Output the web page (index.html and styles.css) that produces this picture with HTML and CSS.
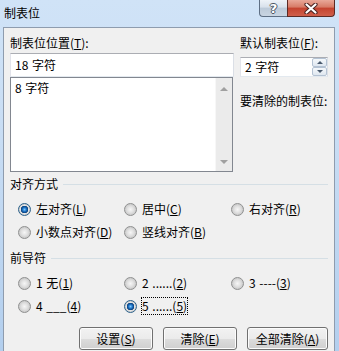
FILE: index.html
```html
<!DOCTYPE html>
<html>
<head>
    <title>制表位</title>
    <link rel="stylesheet" href="styles.css">
</head>
<body>
<div class="window">
    <div class="titlebar">
        <span class="title">制表位</span>
        <div class="caption-buttons">
            <span class="cap-btn help">?</span>
            <span class="cap-btn close">
                <svg width="14" height="11" viewBox="0 0 14 11">
                    <path d="M2.5 1.5 L11.5 9.5 M11.5 1.5 L2.5 9.5" stroke="#4a2320" stroke-width="4.2" stroke-linecap="round"/>
                    <path d="M2.5 1.5 L11.5 9.5 M11.5 1.5 L2.5 9.5" stroke="#fff" stroke-width="2.2" stroke-linecap="round"/>
                </svg>
            </span>
        </div>
    </div>

    <div class="client">
        <div class="top">
            <div class="col-left">
                <div class="lbl">制表位位置(<u>T</u>):</div>
                <div class="textbox">18 字符</div>
                <div class="listbox">
                    <div class="list-items">
                        <div class="list-item">8 字符</div>
                    </div>
                    <div class="scrollbar">
                        <span class="arrow up"></span>
                        <span class="arrow down"></span>
                    </div>
                </div>
            </div>
            <div class="col-right">
                <div class="lbl">默认制表位(<u>F</u>):</div>
                <div class="spin">
                    <span class="spin-text">2 字符</span>
                    <div class="spin-btns">
                        <span class="spin-btn"><span class="tri up"></span></span>
                        <span class="spin-btn"><span class="tri down"></span></span>
                    </div>
                </div>
                <div class="lbl clear-lbl">要清除的制表位:</div>
            </div>
        </div>

        <div class="group-head"><span>对齐方式</span><span class="rule"></span></div>
        <div class="radio-grid">
            <div class="radio"><span class="dot on"></span><span>左对齐(<u>L</u>)</span></div>
            <div class="radio"><span class="dot"></span><span>居中(<u>C</u>)</span></div>
            <div class="radio"><span class="dot"></span><span>右对齐(<u>R</u>)</span></div>
            <div class="radio"><span class="dot"></span><span>小数点对齐(<u>D</u>)</span></div>
            <div class="radio"><span class="dot"></span><span>竖线对齐(<u>B</u>)</span></div>
        </div>

        <div class="group-head leaders"><span>前导符</span><span class="rule"></span></div>
        <div class="radio-grid">
            <div class="radio"><span class="dot"></span><span>1 无(<u>1</u>)</span></div>
            <div class="radio"><span class="dot"></span><span>2 ......(<u>2</u>)</span></div>
            <div class="radio"><span class="dot"></span><span>3 ----(<u>3</u>)</span></div>
            <div class="radio"><span class="dot"></span><span>4 ___(<u>4</u>)</span></div>
            <div class="radio"><span class="dot on"></span><span class="focus">5 ......(<u>5</u>)</span></div>
        </div>

        <div class="buttons">
            <span class="btn btn-set"><span>设置(<u>S</u>)</span></span>
            <span class="btn btn-clear"><span>清除(<u>E</u>)</span></span>
            <span class="btn btn-all"><span>全部清除(<u>A</u>)</span></span>
        </div>
    </div>
</div>
</body>
</html>
```

FILE: styles.css
```css
body {
    margin: 0;
    font-family: "Noto Sans CJK SC", "Noto Sans", sans-serif;
    font-size: 12px;
    word-spacing: 1px;
    color: #000;
}
u {
    text-underline-offset: 1px;
}
.window {
    width: 339px;
    height: 351px;
    overflow: hidden;
    background: linear-gradient(180deg, #d0e3f7 0%, #c8ddf4 40%, #b3cfee 100%);
}
.titlebar {
    height: 27px;
    display: flex;
    justify-content: space-between;
    align-items: flex-start;
}
.title {
    padding: 5px 0 0 4px;
    line-height: 16px;
}
.caption-buttons {
    display: flex;
    margin-right: 4px;
}
.cap-btn {
    height: 17px;
    box-sizing: border-box;
    display: flex;
    align-items: center;
    justify-content: center;
    border: 1px solid #5e6f84;
    border-top: none;
}
.help {
    width: 28px;
    border-right: none;
    border-radius: 0 0 0 4px;
    background: linear-gradient(180deg, #eef3f8 0%, #d8e1eb 45%, #bccad9 50%, #c9d5e2 100%);
    color: #fff;
    font-family: "DejaVu Sans", sans-serif;
    font-weight: bold;
    font-size: 13px;
    line-height: 15px;
    text-shadow: 1px 0 0 #4b5563, -1px 0 0 #4b5563, 0 1px 0 #4b5563, 0 -1px 0 #4b5563;
}
.close {
    width: 48px;
    border-color: #5c2a24;
    border-radius: 0 0 4px 0;
    background: linear-gradient(180deg, #e9a899 0%, #d77a66 45%, #c4432f 50%, #cf5f4b 100%);
}
.client {
    margin: 0 4px 0 3px;
    height: 330px;
    border: 1px solid #8e9cae;
    border-bottom: none;
    background: #f0f0f0;
    padding: 7px 6px 0;
}
.top {
    display: flex;
}
.col-left {
    width: 224px;
}
.col-right {
    width: 88px;
    margin-left: 6px;
}
.lbl {
    line-height: 16px;
    white-space: nowrap;
}
.textbox {
    margin-top: 2px;
    width: 224px;
    height: 24px;
    box-sizing: border-box;
    border: 1px solid;
    border-color: #abadb3 #dbdfe6 #e3e9ef #e2e3ea;
    background: #fff;
    padding-left: 4px;
    line-height: 22px;
}
.listbox {
    width: 223px;
    height: 95px;
    box-sizing: border-box;
    border: 1px solid #828790;
    background: #fff;
    display: flex;
}
.list-items {
    flex: 1;
    padding: 2px 0 0 4px;
}
.list-item {
    line-height: 16px;
}
.scrollbar {
    width: 17px;
    box-sizing: border-box;
    background: #ebebeb;
    border-left: 1px solid #f7f7f7;
    display: flex;
    flex-direction: column;
    justify-content: space-between;
    align-items: center;
    padding: 9px 0 7px;
}
.arrow {
    width: 0;
    height: 0;
    border-left: 4px solid transparent;
    border-right: 4px solid transparent;
}
.arrow.up {
    border-bottom: 4px solid #a0a0a0;
}
.arrow.down {
    border-top: 4px solid #a0a0a0;
}
.spin {
    margin-top: 6px;
    height: 20px;
    box-sizing: border-box;
    border: 1px solid;
    border-color: #abadb3 #dbdfe6 #e3e9ef #e2e3ea;
    background: #fff;
    display: flex;
}
.spin-text {
    flex: 1;
    padding-left: 4px;
    line-height: 18px;
}
.spin-btns {
    width: 15px;
    display: flex;
    flex-direction: column;
}
.spin-btn {
    flex: 1;
    display: flex;
    align-items: center;
    justify-content: center;
    border: 1px solid #b4c2d3;
    border-radius: 2px;
    background: linear-gradient(180deg, #f5f8fb, #dfe7f0);
}
.tri {
    width: 0;
    height: 0;
    border-left: 3px solid transparent;
    border-right: 3px solid transparent;
}
.tri.up {
    border-bottom: 3px solid #4a5a6e;
}
.tri.down {
    border-top: 3px solid #4a5a6e;
}
.clear-lbl {
    margin-top: 16px;
}
.group-head {
    display: flex;
    align-items: center;
    margin-top: 4px;
    line-height: 16px;
}
.group-head.leaders {
    margin-top: 10px;
}
.rule {
    flex: 1;
    height: 1px;
    background: #d5dfe5;
    margin-left: 5px;
}
.radio-grid {
    display: grid;
    grid-template-columns: 106px 107px auto;
    row-gap: 7px;
    padding-left: 8px;
    margin-top: 9px;
}
.radio {
    display: flex;
    align-items: center;
    gap: 5px;
    line-height: 16px;
    white-space: nowrap;
}
.dot {
    width: 13px;
    height: 13px;
    flex: none;
    border-radius: 50%;
    box-sizing: border-box;
    border: 1px solid #8e8f8f;
    background: radial-gradient(circle at 50% 50%, #f6f6f6 0, #e2e2e2 3px, #cbcbcb 5.5px, #f4f4f4 6px);
}
.dot.on {
    border-color: #2c628b;
    background: radial-gradient(circle at 50% 50%, #7fcaff 0, #1c72c4 2px, #0b3f7a 3.5px, #e6e6e6 4px, #cbcbcb 5.5px, #f4f4f4 6px);
}
.focus {
    display: inline-block;
    line-height: 16px;
    outline: 1px dotted #000;
}
.buttons {
    display: flex;
    justify-content: flex-end;
    gap: 10px;
    margin-top: 13px;
}
.btn {
    height: 23px;
    box-sizing: border-box;
    border: 1px solid #707070;
    border-radius: 3px;
    background: linear-gradient(180deg, #f2f2f2 0%, #ebebeb 50%, #dddddd 50%, #cfcfcf 100%);
    box-shadow: inset 0 0 0 1px #fcfcfc;
    display: flex;
    align-items: center;
    justify-content: center;
}
.btn-set, .btn-clear {
    width: 74px;
}
.btn-all {
    width: 81px;
}
```
